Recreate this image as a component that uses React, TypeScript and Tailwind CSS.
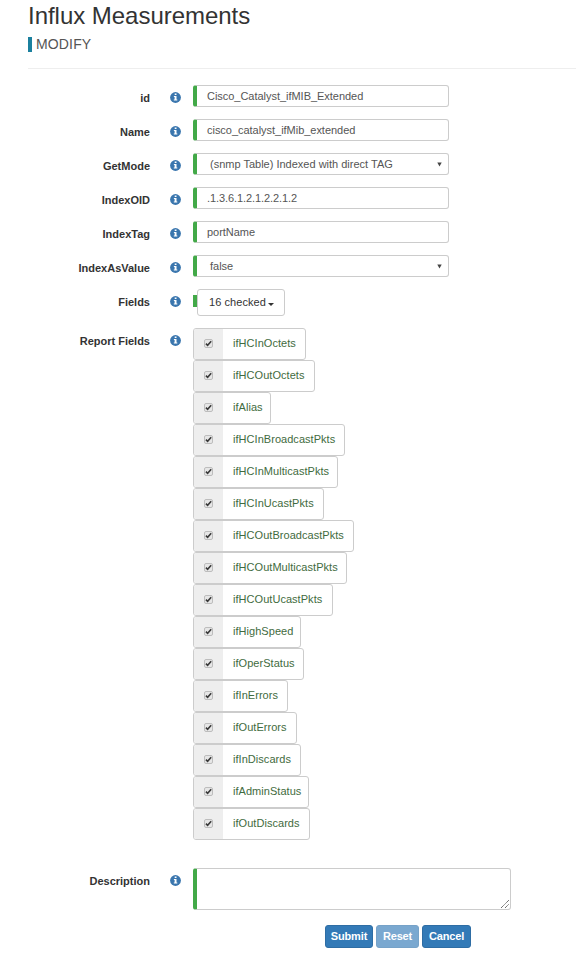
import React from "react";

type FieldProps = {
  label: string;
  height: string;
  children: React.ReactNode;
};

const reportFields = [
  { name: "ifHCInOctets", width: 113 },
  { name: "ifHCOutOctets", width: 122 },
  { name: "ifAlias", width: 78 },
  { name: "ifHCInBroadcastPkts", width: 152 },
  { name: "ifHCInMulticastPkts", width: 145 },
  { name: "ifHCInUcastPkts", width: 131 },
  { name: "ifHCOutBroadcastPkts", width: 161 },
  { name: "ifHCOutMulticastPkts", width: 154 },
  { name: "ifHCOutUcastPkts", width: 140 },
  { name: "ifHighSpeed", width: 108 },
  { name: "ifOperStatus", width: 111 },
  { name: "ifInErrors", width: 95 },
  { name: "ifOutErrors", width: 104 },
  { name: "ifInDiscards", width: 108 },
  { name: "ifAdminStatus", width: 116 },
  { name: "ifOutDiscards", width: 117 },
];

function InfoIcon() {
  return (
    <svg width="11" height="11" viewBox="0 0 11 11" className="block">
      <circle cx="5.5" cy="5.5" r="5.4" fill="#3a76ae" />
      <path d="M4.7 1.6h1.8v1.5H4.7zM3.9 4h2.6v3.6h.8v1H3.8v-1h.8V5h-.7z" fill="#fff" />
    </svg>
  );
}

function Field({ label, height, children }: FieldProps) {
  return (
    <div className={`flex items-start ${height}`}>
      <div className="w-[150px] shrink-0 pt-[6px] text-right font-bold leading-[14px] text-[#333]">{label}</div>
      <div className="ml-5 w-[23px] shrink-0 pt-[7px]">
        <InfoIcon />
      </div>
      {children}
    </div>
  );
}

const box = "h-[22px] w-[256px] rounded-[3px] border border-l-4 border-[#ccc] border-l-[#42a948] bg-white text-[#555]";

function TextBox({ value, tracking = "tracking-[-0.03px]" }: { value: string; tracking?: string }) {
  return <div className={`${box} ${tracking} whitespace-pre pl-[10px] leading-[21px]`}>{value}</div>;
}

function SelectBox({ value }: { value: string }) {
  return (
    <div className={`${box} flex items-center justify-between pl-[13px] pr-[6px] leading-[20px]`}>
      <span>{value}</span>
      <svg width="5" height="5" viewBox="0 0 5 5">
        <path d="M.3 .5h4.4L2.5 4.5z" fill="#444" />
      </svg>
    </div>
  );
}

function CheckMark() {
  return (
    <span className="mb-[2px] flex h-[9px] w-[9px] items-center justify-center rounded-[2px] border border-[#bdbdbd] bg-[#e6e6e6]">
      <svg width="9" height="9" viewBox="0 0 9 9" className="shrink-0">
        <path d="M1.9 4.7l1.7 1.6L7.2 2.2" stroke="#3a3a3a" strokeWidth="1.6" fill="none" />
      </svg>
    </span>
  );
}

export default function App() {
  return (
    <main className="h-[958px] w-[576px] overflow-hidden bg-white font-['Liberation_Sans',Arial,sans-serif] text-[11px]">
      <header className="ml-7 h-[69px] border-b border-[#eee] pt-[2px]">
        <h1 className="h-[35px] whitespace-nowrap text-[24px] leading-[28px] tracking-[-0.03px] text-[#333]">Influx Measurements</h1>
        <h2 className="h-[15px] border-l-4 border-[#1b809e] pl-1 text-[14px] leading-[15px] tracking-[0.15px] text-[#555]">MODIFY</h2>
      </header>
      <form className="pt-4">
        <Field label="id" height="h-[34px]"><TextBox value="Cisco_Catalyst_ifMIB_Extended" /></Field>
        <Field label="Name" height="h-[34px]"><TextBox value="cisco_catalyst_ifMib_extended" /></Field>
        <Field label="GetMode" height="h-[34px]"><SelectBox value="(snmp Table) Indexed with direct TAG" /></Field>
        <Field label="IndexOID" height="h-[34px]"><TextBox value=".1.3.6.1.2.1.2.2.1.2" tracking="tracking-[-0.08px]" /></Field>
        <Field label="IndexTag" height="h-[34px]"><TextBox value="portName" /></Field>
        <Field label="IndexAsValue" height="h-[34px]"><SelectBox value="false" /></Field>
        <Field label="Fields" height="h-[39px]">
          <div className="mt-[6px] h-3 w-1 bg-[#42a948]" />
          <button type="button" className="flex h-[27px] w-[88px] items-center rounded-[3px] border border-[#ccc] pl-[11px] tracking-[0.06px] text-[#333]">
            16 checked
            <svg width="6" height="3" viewBox="0 0 6 3" className="ml-[2px] mt-[3px]"><path d="M0 0h6L3 3z" fill="#333" /></svg>
          </button>
        </Field>
        <Field label="Report Fields" height="h-[540px]">
          <ul>
            {reportFields.map((f) => (
              <li key={f.name} className="flex h-8 overflow-hidden rounded-[3px] border border-[#ccc]" style={{ width: f.width }}>
                <span className="flex w-[29px] shrink-0 items-center justify-center bg-[#eee]"><CheckMark /></span>
                <span className="whitespace-nowrap pl-[10px] leading-[29px] tracking-[0.04px] text-[#3f6b40]">{f.name}</span>
              </li>
            ))}
          </ul>
        </Field>
        <Field label="Description" height="h-[57px]">
          <div className="flex h-[42px] w-[318px] items-end justify-end rounded-[3px] border border-l-4 border-[#ccc] border-l-[#42a948] p-px">
            <svg width="8" height="8" viewBox="0 0 8 8"><path d="M0 8L8 0M4 8l4-4" stroke="#555" strokeWidth="1" strokeDasharray="1.2 .5" /></svg>
          </div>
        </Field>
        <div className="ml-[325px] flex gap-[3px] font-bold tracking-[-0.15px] text-white">
          <button type="button" className="h-[23px] w-12 rounded-[3px] border border-[#2e6da4] bg-[#337ab7]">Submit</button>
          <button type="button" className="h-[23px] w-[43px] rounded-[3px] border border-[#76a2c8] bg-[#7aa8d0]">Reset</button>
          <button type="button" className="h-[23px] w-[49px] rounded-[3px] border border-[#2e6da4] bg-[#337ab7]">Cancel</button>
        </div>
      </form>
    </main>
  );
}
